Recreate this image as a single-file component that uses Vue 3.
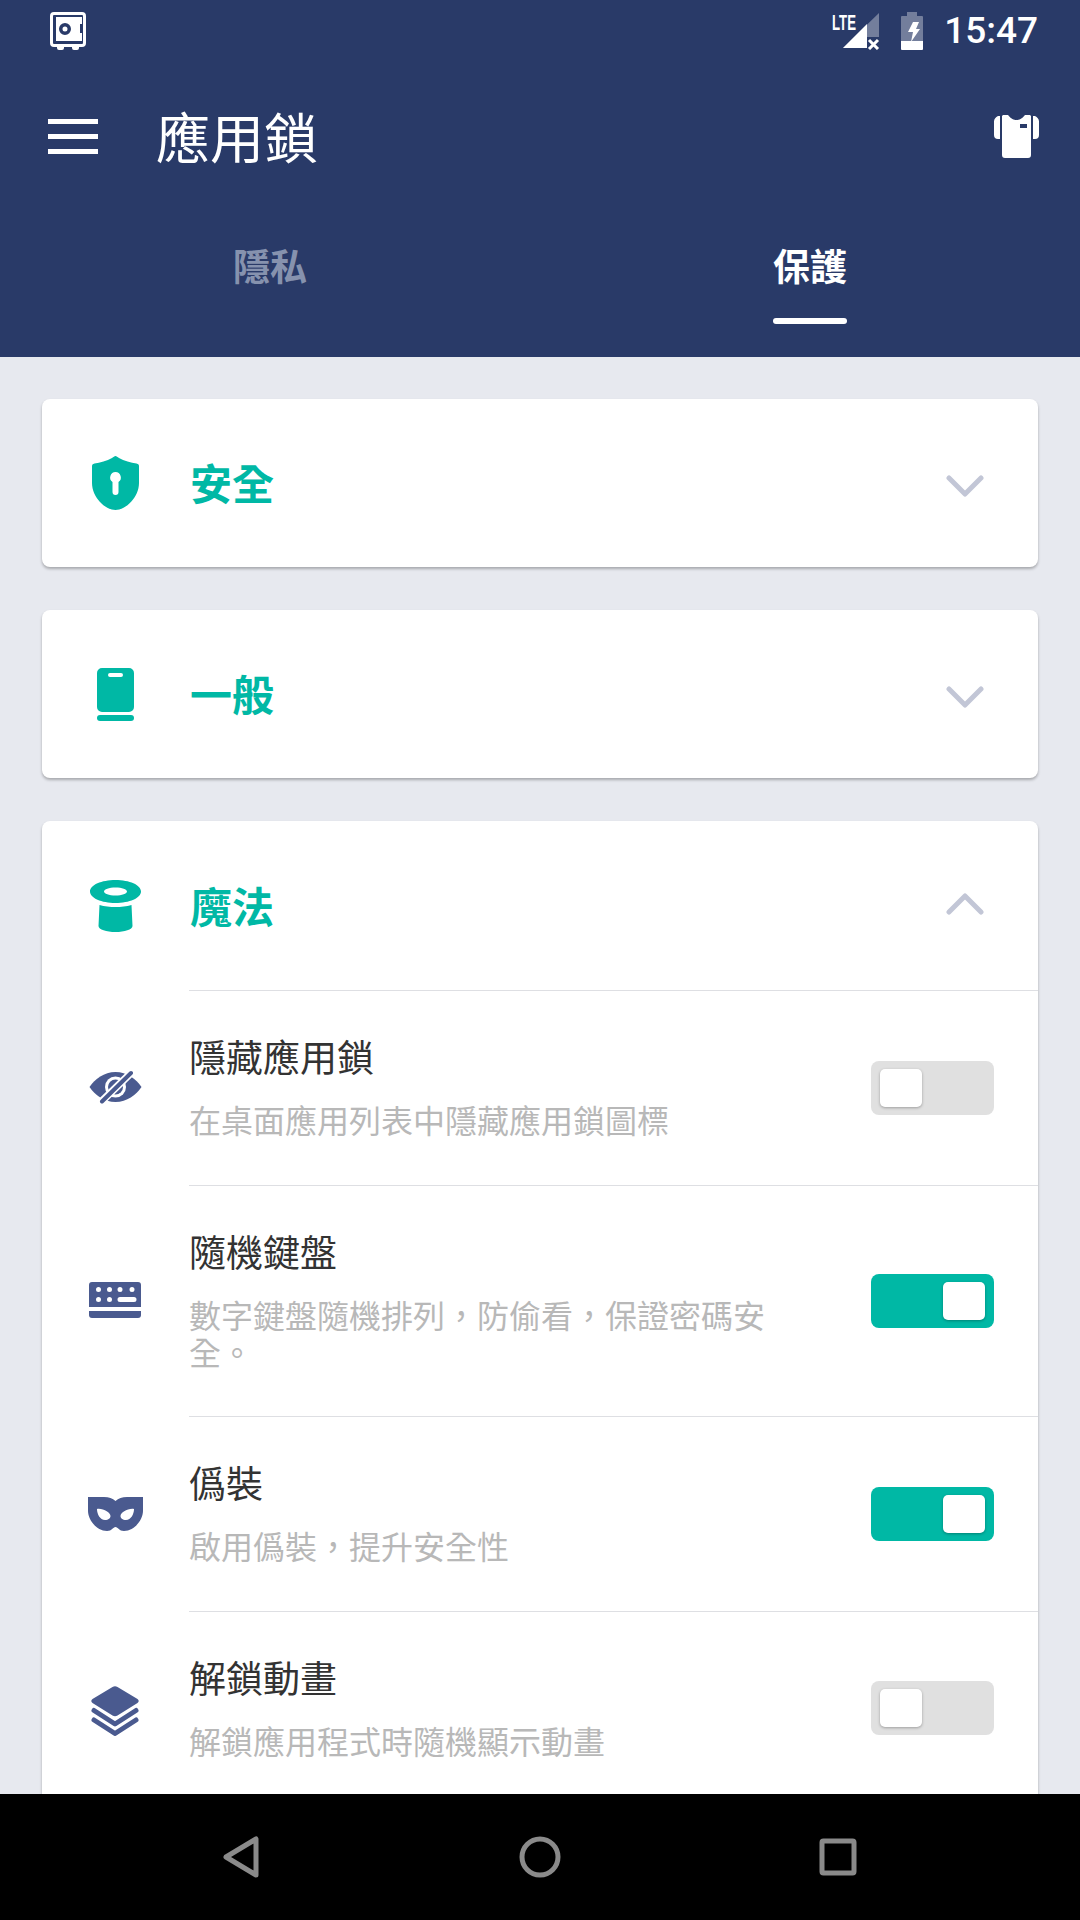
<template>
  <div class="screen">
    <header class="header">
      <div class="status-bar">
        <svg class="safe-icon" viewBox="0 0 36 38">
          <path fill="#fff" fill-rule="evenodd" d="M4 0h28a4 4 0 0 1 4 4v27a4 4 0 0 1-4 4h-3v1a2 2 0 0 1-2 2h-3a2 2 0 0 1-2-2v-1H14v1a2 2 0 0 1-2 2H9a2 2 0 0 1-2-2v-1H4a4 4 0 0 1-4-4V4a4 4 0 0 1 4-4zM4 3a1 1 0 0 0-1 1v27a1 1 0 0 0 1 1h28a1 1 0 0 0 1-1V4a1 1 0 0 0-1-1z" />
          <path fill="#fff" fill-rule="evenodd" d="M6 5h26v7h-2v9h2v8H6zM15 11a6 6 0 1 0 0 12 6 6 0 0 0 0-12zm0 3.500a2.500 2.500 0 1 1 0 5 2.500 2.500 0 0 1 0-5z" />
        </svg>
        <div class="status-right">
          <svg class="signal-icon" viewBox="0 0 48 38">
            <text transform="scale(0.6 1)" x="0" y="18" class="lte">LTE</text>
            <path fill="#fff" fill-opacity="0.35" d="M47 1v24H35v11H11z" />
            <path fill="#fff" d="M35 12v24H11z" />
            <path stroke="#fff" stroke-width="3" d="M37 28l9 9M46 28l-9 9" />
          </svg>
          <svg class="battery-icon" viewBox="0 0 22 38">
            <path fill="#fff" fill-opacity="0.35" d="M6 0h10v4h5a1 1 0 0 1 1 1v24H0V5a1 1 0 0 1 1-1h5z" />
            <path fill="#fff" d="M0 29h22v8a1 1 0 0 1-1 1H1a1 1 0 0 1-1-1z" />
            <path fill="#fff" d="M12 10h6l-3 7h4l-9 13 2-10H7z" />
          </svg>
          <span class="clock">15:47</span>
        </div>
      </div>
      <div class="toolbar">
        <div class="menu-icon"><i></i><i></i><i></i></div>
        <h1 class="title">應用鎖</h1>
        <svg class="shirt-icon" viewBox="0 0 45 43">
          <path fill="#fff" d="M4 1h2v23H4a4 4 0 0 1-4-4V8a7 7 0 0 1 4-7zM39 1h2a7 7 0 0 1 4 7v12a4 4 0 0 1-4 4h-2z" />
          <path fill="#fff" fill-rule="evenodd" d="M9 0h5c3 4 6 5 8.500 5S28 4 31 0h5l1 1v39a3 3 0 0 1-3 3H11a3 3 0 0 1-3-3V1zM26 9v4h7V9z" />
        </svg>
      </div>
      <nav class="tabs">
        <div class="tab"><span class="tab-label">隱私</span></div>
        <div class="tab tab--active"><span class="tab-label">保護</span></div>
      </nav>
    </header>

    <main class="content">
      <section class="card">
        <div class="card-head">
          <div class="icon-col">
            <svg class="head-icon" width="47" height="54" viewBox="0 0 47 54">
              <path fill="#00b8a5" d="M23.500 0c1 0 2 1 3.500 2 5 3 12 4.500 17.500 5.500 2 .4 2.500 1.200 2.500 3V27c0 14-13 27-23.500 27S0 41 0 27V10.500c0-1.800.5-2.600 2.500-3C8 6.500 15 5 20 2c1.500-1 2.500-2 3.500-2z" />
              <path fill="#fff" d="M23.500 16a5.500 5.500 0 0 1 3 10v10a3 3 0 0 1-6 0V26a5.500 5.500 0 0 1 3-10z" />
            </svg>
          </div>
          <h2 class="card-title">安全</h2>
          <svg class="chevron chevron--down" viewBox="0 0 38 22"><path d="M3 3l16 16L35 3" /></svg>
        </div>
      </section>

      <section class="card">
        <div class="card-head">
          <div class="icon-col">
            <svg class="head-icon" width="37" height="53" viewBox="0 0 37 53">
              <path fill="#00b8a5" fill-rule="evenodd" d="M5 0h27a5 5 0 0 1 5 5v34a5 5 0 0 1-5 5H5a5 5 0 0 1-5-5V5a5 5 0 0 1 5-5zM13 5a2 2 0 0 0 0 4h11a2 2 0 0 0 0-4z" />
              <rect fill="#00b8a5" y="47" width="37" height="6" rx="3" />
            </svg>
          </div>
          <h2 class="card-title">一般</h2>
          <svg class="chevron chevron--down" viewBox="0 0 38 22"><path d="M3 3l16 16L35 3" /></svg>
        </div>
      </section>

      <section class="card card--open">
        <div class="card-head">
          <div class="icon-col">
            <svg class="head-icon" width="51" height="52" viewBox="0 0 51 52">
              <path fill="#00b8a5" fill-rule="evenodd" d="M25.500 0C39.500 0 51 5 51 11.500S39.500 23 25.500 23 0 18 0 11.500 11.500 0 25.500 0zm0 7.500c-6.500 0-11.500 1.800-11.500 4s5 4 11.500 4 11.500-1.800 11.500-4-5-4-11.500-4z" />
              <path fill="#00b8a5" d="M9.500 25c5 1.500 10.500 2 16 2s11-.5 16-2l1 21c0 3.500-8 6-17 6s-17-2.500-17-6z" />
            </svg>
          </div>
          <h2 class="card-title">魔法</h2>
          <svg class="chevron chevron--up" viewBox="0 0 38 22"><path d="M3 19L19 3l16 16" /></svg>
        </div>

        <div v-for="row in rows" :key="row.title" class="row">
          <div class="icon-col">
            <svg v-if="row.icon === 'eye'" class="row-icon" width="53" height="34" viewBox="0 0 53 34">
              <path fill="#4a5a8f" d="M26.500 2C38 2 47 9 52.500 17 47 25 38 32 26.500 32S6 25 .5 17C6 9 15 2 26.500 2z" />
              <circle cx="26.500" cy="17" r="10.500" fill="#fff" />
              <circle cx="26.500" cy="17" r="7.500" fill="#4a5a8f" />
              <path stroke="#fff" stroke-width="7.500" d="M11 33L44 1" />
              <path stroke="#4a5a8f" stroke-width="4" stroke-linecap="round" d="M13 31.500L42 3" />
            </svg>
            <svg v-else-if="row.icon === 'keyboard'" class="row-icon" width="52" height="36" viewBox="0 0 52 36">
              <path fill="#4a5a8f" fill-rule="evenodd" d="M3 0h46a3 3 0 0 1 3 3v22H0V3a3 3 0 0 1 3-3zM9.500 5a2.500 2.500 0 1 0 0 5 2.500 2.500 0 0 0 0-5zm11 0a2.500 2.500 0 1 0 0 5 2.500 2.500 0 0 0 0-5zm10.500 0a2.500 2.500 0 1 0 0 5 2.500 2.500 0 0 0 0-5zm12 0a2.500 2.500 0 1 0 0 5 2.500 2.500 0 0 0 0-5zM9.500 15a2.500 2.500 0 1 0 0 5 2.500 2.500 0 0 0 0-5zm11 0a2.500 2.500 0 1 0 0 5 2.500 2.500 0 0 0 0-5zM31 15a2.500 2.500 0 0 0 0 5h14a2.500 2.500 0 0 0 0-5z" />
              <path fill="#4a5a8f" d="M0 29h52v4a3 3 0 0 1-3 3H3a3 3 0 0 1-3-3z" />
            </svg>
            <svg v-else-if="row.icon === 'mask'" class="row-icon row-icon--mask" width="55" height="34" viewBox="0 0 55 34">
              <path fill="#4a5a8f" fill-rule="evenodd" d="M0 0h16c5 0 8.500 1.500 11.500 4 3-2.500 6.500-4 11.500-4h16v14c0 8-8 20-19 20-5 0-6-4-8.500-4S24 34 19 34C8 34 0 22 0 14zM9 12c0 5 3 11 8 11 3.500 0 5.500-2 5.500-4 0-3.500-7.500-8-13.500-7zm37 0c-6-1-13.500 3.500-13.500 7 0 2 2 4 5.500 4 5 0 8-6 8-11z" />
            </svg>
            <svg v-else class="row-icon row-icon--layers" width="48" height="50" viewBox="0 0 48 50">
              <path fill="#4a5a8f" d="M21.500 1a4.500 4.500 0 0 1 5 0l20 12c1.600 1 1.600 3 0 4l-20 12.500a4.500 4.500 0 0 1-5 0L1.500 17c-1.600-1-1.600-3 0-4z" />
              <path fill="none" stroke="#4a5a8f" stroke-width="5" stroke-linecap="round" stroke-linejoin="round" d="M3 24.500l21 13.500 21-13.500" />
              <path fill="none" stroke="#4a5a8f" stroke-width="5" stroke-linecap="round" stroke-linejoin="round" d="M3 34l21 13.500L45 34" />
            </svg>
          </div>
          <div class="row-body">
            <div class="row-text">
              <div class="row-title">{{ row.title }}</div>
              <div class="row-sub">{{ row.sub }}</div>
            </div>
            <div class="toggle" :class="{ 'toggle--on': row.on }">
              <div class="toggle-knob"></div>
            </div>
          </div>
        </div>
      </section>
    </main>

    <footer class="nav-bar">
      <svg class="nav-icon" width="36" height="42" viewBox="0 0 36 42"><path d="M33 3v36L3 21z" /></svg>
      <svg class="nav-icon" width="42" height="42" viewBox="0 0 42 42"><circle cx="21" cy="21" r="18" /></svg>
      <svg class="nav-icon" width="38" height="38" viewBox="0 0 38 38"><rect x="3" y="3" width="32" height="32" rx="1.500" /></svg>
    </footer>
  </div>
</template>

<script setup>
const rows = [
  { icon: 'eye', title: '隱藏應用鎖', sub: '在桌面應用列表中隱藏應用鎖圖標', on: false },
  { icon: 'keyboard', title: '隨機鍵盤', sub: '數字鍵盤隨機排列，防偷看，保證密碼安全。', on: true },
  { icon: 'mask', title: '僞裝', sub: '啟用僞裝，提升安全性', on: true },
  { icon: 'layers', title: '解鎖動畫', sub: '解鎖應用程式時隨機顯示動畫', on: false }
];
</script>

<style>
html,
body {
  margin: 0;
  background: #e7e9ef;
}
</style>

<style scoped>
.screen {
  display: flex;
  flex-direction: column;
  width: 1080px;
  height: 1920px;
  overflow: hidden;
  background: #e7e9ef;
  font-family: "Noto Sans CJK TC", "Noto Sans", sans-serif;
}

.header {
  flex: none;
  height: 357px;
  background: #293a68;
  color: #fff;
}

.status-bar {
  display: flex;
  justify-content: space-between;
  align-items: center;
  height: 62px;
  padding: 0 42px 0 50px;
}

.safe-icon {
  width: 36px;
  height: 38px;
}

.status-right {
  display: flex;
  align-items: center;
}

.signal-icon {
  width: 48px;
  height: 38px;
}

.lte {
  fill: #fff;
  font-family: "Liberation Sans", sans-serif;
  font-size: 22px;
  font-weight: 700;
}

.battery-icon {
  width: 22px;
  height: 38px;
  margin-left: 21px;
}

.clock {
  margin-left: 21px;
  font-family: Roboto, sans-serif;
  font-size: 37px;
  font-weight: 500;
  line-height: 44px;
}

.toolbar {
  display: flex;
  align-items: center;
  height: 148px;
  padding: 0 41px 0 48px;
}

.menu-icon {
  display: flex;
  flex-direction: column;
  gap: 10px;
  width: 50px;
}

.menu-icon i {
  display: block;
  height: 5px;
  background: #fff;
}

.title {
  flex: 1;
  margin: 0 0 0 58px;
  font-size: 54px;
  font-weight: 400;
  line-height: 64px;
}

.shirt-icon {
  width: 45px;
  height: 43px;
}

.tabs {
  display: flex;
  margin-top: 29px;
}

.tab {
  display: flex;
  flex: 1;
  justify-content: center;
  color: #8692ae;
  font-size: 37px;
  font-weight: 700;
  line-height: 52px;
}

.tab-label {
  position: relative;
  height: 85px;
}

.tab--active {
  color: #fff;
}

.tab--active .tab-label::after {
  content: "";
  position: absolute;
  left: 0;
  right: 0;
  bottom: 0;
  height: 6px;
  border-radius: 3px;
  background: #fff;
}

.content {
  display: flex;
  flex: 1;
  flex-direction: column;
  gap: 43px;
  min-height: 0;
  overflow: hidden;
  padding: 42px 42px 0;
}

.card {
  flex: none;
  border-radius: 8px;
  background: #fff;
  box-shadow: 0 2px 3px rgba(0, 0, 0, 0.28);
}

.card-head {
  display: flex;
  align-items: center;
  height: 168px;
}

.card--open .card-head {
  height: 169px;
}

.icon-col {
  display: flex;
  flex: none;
  justify-content: center;
  align-items: center;
  width: 64px;
  margin: 0 42px 0 41px;
}

.card-title {
  flex: 1;
  margin: 0;
  padding: 0 0 2px 1px;
  color: #00b8a5;
  font-size: 42px;
  font-weight: 700;
  line-height: 60px;
}

.chevron {
  width: 38px;
  height: 22px;
  margin-right: 54px;
  fill: none;
  stroke: #c2c6d6;
  stroke-width: 5;
  stroke-linecap: round;
  stroke-linejoin: round;
}

.chevron--down {
  margin-top: 6px;
}

.chevron--up {
  margin-bottom: 4px;
}

.row {
  display: flex;
  align-items: center;
}

.row-icon--mask {
  margin-top: 2px;
}

.row-icon--layers {
  margin-top: 6px;
}

.row-body {
  display: flex;
  flex: 1;
  align-items: center;
  justify-content: space-between;
  padding-right: 44px;
  border-top: 1px solid #dedfe3;
}

.row-text {
  width: 590px;
  padding: 41px 0 46.5px;
}

.row-title {
  margin-bottom: 21px;
  color: #333;
  font-size: 37px;
  line-height: 48px;
}

.row-sub {
  color: #b8b8b8;
  font-size: 32px;
  line-height: 37px;
}

.toggle {
  display: flex;
  flex: none;
  align-items: center;
  box-sizing: border-box;
  width: 123px;
  height: 54px;
  padding: 0 9px;
  border-radius: 8px;
  background: #e0e0e0;
}

.toggle--on {
  justify-content: flex-end;
  background: #00b8a5;
}

.toggle-knob {
  width: 42px;
  height: 38px;
  border-radius: 5px;
  background: #fff;
  box-shadow: 0 1px 3px rgba(0, 0, 0, 0.3);
}

.nav-bar {
  position: relative;
  flex: none;
  height: 126px;
  background: #000;
}

.nav-icon {
  position: absolute;
  top: 42px;
  fill: none;
  stroke: #8a8a8a;
  stroke-width: 5;
  stroke-linejoin: round;
}

.nav-icon:nth-child(1) {
  left: 223px;
}

.nav-icon:nth-child(2) {
  left: 519px;
}

.nav-icon:nth-child(3) {
  left: 819px;
  top: 44px;
}
</style>
